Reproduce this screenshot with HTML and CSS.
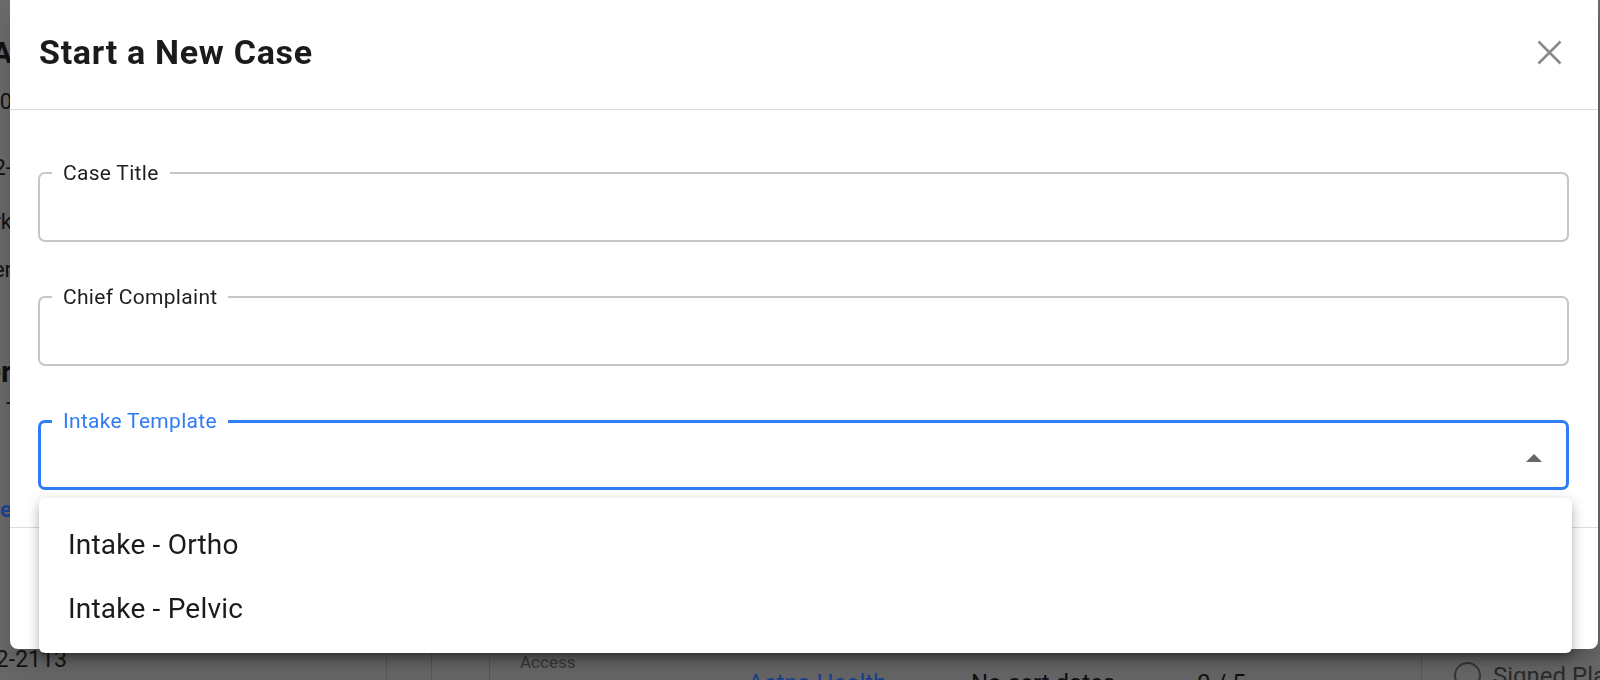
FILE: index.html
```html
<!DOCTYPE html>
<html lang="en">
<head>
    <meta charset="UTF-8">
    <meta name="viewport" content="width=device-width, initial-scale=1.0">
    <title>Start a New Case</title>
    <link rel="stylesheet" href="styles.css">
</head>
<body>
    <!-- Page behind the dialog (dimmed) -->
    <div class="page">
        <div class="profile">
            <div class="line line-1 bold big">Patient A</div>
            <div class="line line-2">DOB 01/10</div>
            <div class="line line-3">555-212-</div>
            <div class="line line-4">Clark</div>
            <div class="line line-5">Partner</div>
            <div class="line line-6 bold mid">Provider</div>
            <div class="line line-7">-</div>
            <div class="line line-8 bold link">Schedule</div>
        </div>

        <div class="table-row">
            <div class="cell cell-phone"><span class="phone">212-2113</span></div>
            <div class="cell cell-narrow"></div>
            <div class="cell cell-mid"></div>
            <div class="cell cell-info">
                <span class="access">Access</span>
                <span class="payer link">Aetna Health</span>
                <span class="cert">No cert dates</span>
                <span class="count">0 / 5</span>
            </div>
            <div class="cell cell-status">
                <span class="radio"></span>
                <span class="status">Signed Plan</span>
            </div>
        </div>
    </div>

    <!-- Dialog -->
    <div class="dialog">
        <div class="dialog-header">
            <h2 class="dialog-title">Start a New Case</h2>
            <button class="close-btn" aria-label="Close">
                <svg width="25" height="25" viewBox="0 0 25 25">
                    <path d="M1.5 1.5 L23.5 23.5 M23.5 1.5 L1.5 23.5" stroke="#8a8a8a" stroke-width="2.6" fill="none"/>
                </svg>
            </button>
        </div>

        <div class="dialog-body">
            <fieldset class="field">
                <legend>Case Title</legend>
            </fieldset>
            <fieldset class="field">
                <legend>Chief Complaint</legend>
            </fieldset>
            <fieldset class="field field-focused">
                <legend>Intake Template</legend>
                <div class="select-arrow"><span class="arrow-up"></span></div>
            </fieldset>
        </div>

        <div class="dialog-footer"></div>

        <!-- Open select menu -->
        <ul class="menu">
            <li class="menu-item">Intake - Ortho</li>
            <li class="menu-item">Intake - Pelvic</li>
        </ul>
    </div>
</body>
</html>
```

FILE: styles.css
```css
body {
    margin: 0;
    height: 680px;
    overflow: hidden;
    font-family: Roboto, "Liberation Sans", Arial, sans-serif;
    background-color: #6b6b6b; /* dimmed backdrop */
    color: #111;
}

/* Background page */
.page {
    height: 680px;
    display: flex;
    flex-direction: column;
}

.profile {
    width: 300px;
    margin-left: -288px;
    height: 640px;
    text-align: right;
    white-space: nowrap;
    font-size: 22px;
}

.line {
    line-height: 30px;
    height: 30px;
}

.line-1 { margin-top: 38px; }
.line-2 { margin-top: 19px; }
.line-3 { margin-top: 36px; }
.line-4 { margin-top: 24px; }
.line-5 { margin-top: 18px; }
.line-6 { margin-top: 72px; }
.line-7 { margin-top: 1px; }
.line-8 { margin-top: 77px; }

.bold { font-weight: 700; }
.big { font-size: 30px; }
.mid { font-size: 30px; }
.link { color: #1c4593; }

.table-row {
    display: flex;
    height: 40px;
}

.cell {
    flex-shrink: 0;
    height: 40px;
    border-right: 1px solid #5b5b5b;
    box-sizing: border-box;
}

.cell-phone {
    width: 387px;
    overflow: hidden;
    white-space: nowrap;
}

.phone {
    display: block;
    margin-left: -30px;
    padding-top: 6px;
    font-size: 23px;
    color: #151515;
}

.cell-narrow { width: 45px; }
.cell-mid { width: 58px; }

.cell-info {
    width: 932px;
    display: flex;
    align-items: flex-start;
    white-space: nowrap;
}

.access {
    width: 228px;
    margin-left: 30px;
    padding-top: 12px;
    font-size: 17px;
    color: #3a3a3a;
}

.payer, .cert, .count {
    padding-top: 29px;
    font-size: 24px;
}

.payer { width: 223px; }
.cert { width: 226px; }

.cell-status {
    border-right: none;
    display: flex;
    align-items: flex-start;
    white-space: nowrap;
}

.radio {
    width: 23px;
    height: 23px;
    margin: 22px 0 0 32px;
    border: 2px solid #3a3a3a;
    border-radius: 50%;
}

.status {
    margin-left: 12px;
    padding-top: 22px;
    font-size: 24px;
    color: #2c2c2c;
}

/* Dialog */
.dialog {
    position: fixed;
    left: 10px;
    top: 0;
    width: 1588px;
    height: 649px;
    background: #fff;
    border-radius: 0 0 8px 8px;
    display: flex;
    flex-direction: column;
    box-shadow: 0 11px 15px -7px rgba(0, 0, 0, 0.2), 0 24px 38px 3px rgba(0, 0, 0, 0.14);
}

.dialog-header {
    display: flex;
    align-items: center;
    justify-content: space-between;
    padding: 32px 36px 37px 29px;
    border-bottom: 1px solid #dcdcdc;
}

.dialog-title {
    margin: 0;
    font-size: 34px;
    line-height: 40px;
    font-weight: 700;
    color: #1b1b1b;
    letter-spacing: 0.7px;
}

.close-btn {
    width: 25px;
    height: 25px;
    padding: 0;
    border: none;
    background: none;
    display: flex;
}

.dialog-body {
    display: flex;
    flex-direction: column;
    gap: 45px;
    padding: 53px 29px 37px 28px;
    border-bottom: 1px solid #dcdcdc;
}

.field {
    margin: 0;
    height: 79px;
    box-sizing: border-box;
    padding: 0 24px 0 12px;
    border: 2px solid #c6c6c6;
    border-radius: 7px;
}

.field legend {
    padding: 0 11px;
    font-size: 21px;
    line-height: 20px;
    letter-spacing: 0.3px;
    color: #1f1f1f;
}

.field-focused {
    border: 3px solid #2f7cf5;
    padding-left: 11px;
    padding-right: 24px;
}

.field-focused legend {
    color: #2f7cf5;
}

.select-arrow {
    height: 50px;
    margin-top: 2px;
    display: flex;
    align-items: center;
    justify-content: flex-end;
}

.arrow-up {
    width: 0;
    height: 0;
    border-left: 8px solid transparent;
    border-right: 8px solid transparent;
    border-bottom: 8px solid #666;
}

.dialog-footer {
    flex: 1;
}

/* Select menu */
.menu {
    position: absolute;
    left: 29px;
    top: 498px;
    width: 1533px;
    height: 155px;
    box-sizing: border-box;
    margin: 0;
    padding: 15px 0 12px;
    list-style: none;
    background: #fff;
    border-radius: 6px;
    box-shadow: 0 5px 5px -3px rgba(0, 0, 0, 0.2), 0 8px 10px 1px rgba(0, 0, 0, 0.14), 0 3px 14px 2px rgba(0, 0, 0, 0.12);
}

.menu-item {
    height: 64px;
    line-height: 64px;
    padding-left: 29px;
    font-size: 28px;
    letter-spacing: 0.2px;
    color: #1b1b1b;
}
```
